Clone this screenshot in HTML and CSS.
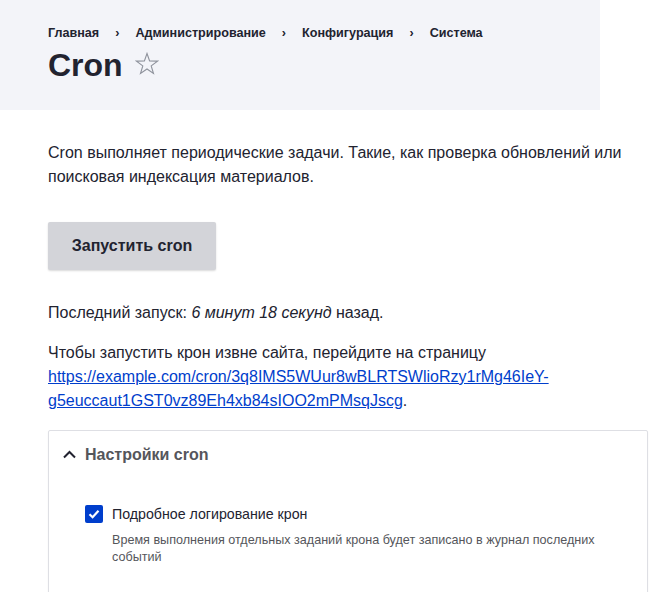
FILE: index.html
```html
<!DOCTYPE html>
<html lang="ru">
<head>
<meta charset="utf-8">
<title>Cron</title>
<link rel="stylesheet" href="styles.css">
</head>
<body>
<header class="page-header">
  <nav class="breadcrumb">
    <a href="#">Главная</a><span class="sep">›</span>
    <a href="#">Администрирование</a><span class="sep">›</span>
    <a href="#">Конфигурация</a><span class="sep">›</span>
    <a href="#">Система</a>
  </nav>
  <h1 class="title">Cron <svg class="star" width="24" height="24" viewBox="0 0 24 24"><path d="M12 1.5 L14.6 9 L22.5 9.1 L16.2 13.9 L18.5 21.5 L12 17 L5.5 21.5 L7.8 13.9 L1.5 9.1 L9.4 9 Z" fill="none" stroke="#8e929c" stroke-width="1.1" stroke-linejoin="miter"/></svg></h1>
</header>
<main class="content">
  <p class="intro">Cron выполняет периодические задачи. Такие, как проверка обновлений или поисковая индексация материалов.</p>
  <button class="btn">Запустить cron</button>
  <p class="last">Последний запуск: <em>6 минут 18 секунд</em> назад.</p>
  <p class="ext">Чтобы запустить крон извне сайта, перейдите на страницу <a href="#">https://example.com/cron/3q8IMS5WUur8wBLRTSWlioRzy1rMg46IeY-g5euccaut1GST0vz89Eh4xb84sIOO2mPMsqJscg</a>.</p>
  <section class="details">
    <div class="summary">
      <svg class="chev" width="15" height="10" viewBox="0 0 15 10"><path d="M2 8.5 L7.5 3 L13 8.5" fill="none" stroke="#222330" stroke-width="2"/></svg>
      <span>Настройки cron</span>
    </div>
    <div class="details-body">
      <label class="check">
        <span class="box"><svg width="18" height="18" viewBox="0 0 18 18"><path d="M4.5 9.2 L7.6 12.2 L13.5 5.8" fill="none" stroke="#fff" stroke-width="2.2"/></svg></span>
        <span class="label-text">Подробное логирование крон</span>
      </label>
      <div class="desc">Время выполнения отдельных заданий крона будет записано в журнал последних событий</div>
    </div>
  </section>
</main>
</body>
</html>
```
FILE: styles.css
```css
* { box-sizing: border-box; }
html, body { margin: 0; padding: 0; }
body {
  font-family: "Liberation Sans", Arial, sans-serif;
  color: #222330;
  background: #fff;
  width: 652px;
  height: 592px;
  overflow: hidden;
}
.page-header {
  width: 600px;
  height: 110px;
  background: #f3f4f9;
  padding: 24px 48px 0;
}
.breadcrumb {
  font-size: 12.6px;
  font-weight: bold;
  line-height: 18px;
  display: flex;
  align-items: center;
}
.breadcrumb a { color: #222330; text-decoration: none; }
.breadcrumb .sep { margin: 0 16px; font-weight: bold; }
.title {
  margin: 3px 0 0;
  font-size: 32px;
  line-height: 40px;
  font-weight: bold;
  display: flex;
  align-items: center;
}
.star {
  margin-left: 12px;
  margin-top: -2px;
}
.content {
  padding: 31px 0 0 48px;
  width: 652px;
}
.content p {
  font-size: 16px;
  line-height: 24px;
  margin: 0;
  padding-right: 24px;
}
.btn {
  margin-top: 33px;
  display: block;
  width: 168px;
  height: 48px;
  background: #d3d4d9;
  border: none;
  border-radius: 2px;
  font-family: inherit;
  font-size: 16px;
  font-weight: bold;
  color: #222330;
  box-shadow: 0 1px 2px rgba(0,0,0,0.15);
}
.content .last { margin-top: 31px; }
.content .ext { margin-top: 16px; }
.ext a { color: #003ecc; }
.details {
  margin-top: 17px;
  width: 600px;
  border: 1px solid #dedfe4;
  border-radius: 2px;
  height: 200px;
  box-shadow: 0 1px 2px rgba(0,0,0,0.05);
}
.summary {
  display: flex;
  align-items: center;
  gap: 8px;
  padding: 14px 13px;
  font-size: 16px;
  font-weight: bold;
  color: #55565b;
  line-height: 20px;
}
.chev { margin-top: -2px; }
.details-body { padding: 25px 36px 0; }
.check {
  display: flex;
  align-items: center;
  gap: 9px;
  font-size: 14.2px;
  line-height: 20px;
}
.box {
  width: 18px;
  height: 18px;
  background: #003ecc;
  border-radius: 2px;
  display: inline-flex;
}
.desc {
  margin: 8px 0 0 27px;
  font-size: 12.6px;
  line-height: 17px;
  color: #55565b;
}
```
